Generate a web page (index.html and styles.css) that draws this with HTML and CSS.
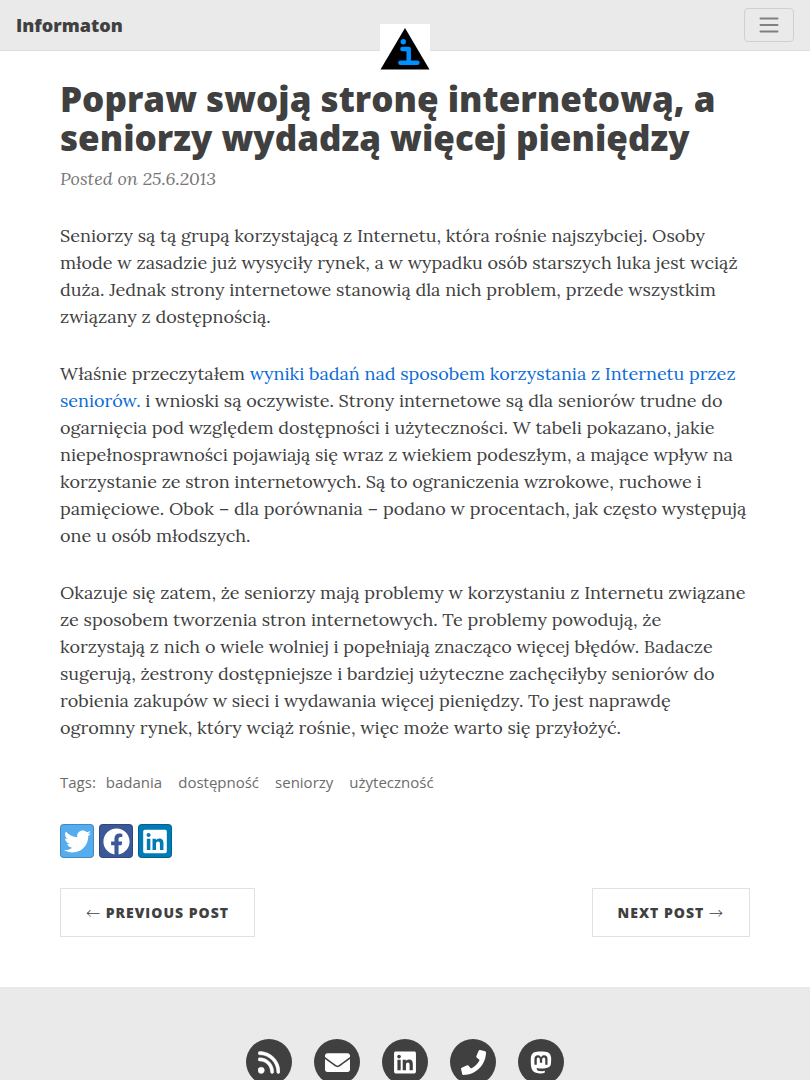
FILE: index.html
```html
<!DOCTYPE html>
<html lang="pl">
<head>
<meta charset="utf-8">
<meta name="viewport" content="width=device-width, initial-scale=1">
<title>Popraw swoją stronę internetową, a seniorzy wydadzą więcej pieniędzy</title>
<link rel="stylesheet" href="styles.css">
</head>
<body>
<nav class="navbar">
  <a class="brand" href="#">Informaton</a>
  <button class="toggler" type="button" aria-label="Menu">
    <svg viewBox="0 0 24 24" width="24" height="24"><path stroke="#808080" stroke-width="2" stroke-linecap="round" d="M3.500 5.500h17M3.500 12h17M3.500 18.500h17"/></svg>
  </button>
  <a class="avatar" href="#" aria-label="Informaton">
    <svg viewBox="0 0 50 50" width="50" height="50"><path d="M25 4 49.500 45.500H.5z"/><circle cx="23.300" cy="17.800" r="2.700" fill="#0090ff"/><path d="M22.400 25h6.300v13.600M20.400 38.700h17" fill="none" stroke="#0090ff" stroke-width="4.500" stroke-linecap="round" stroke-linejoin="round"/></svg>
  </a>
</nav>
<main class="container">
  <header class="post-heading">
    <h1>Popraw swoją stronę internetową, a seniorzy wydadzą więcej pieniędzy</h1>
    <p class="post-meta">Posted on 25.6.2013</p>
  </header>
  <article class="post">
    <p>Seniorzy są tą grupą korzystającą z Internetu, która rośnie najszybciej. Osoby młode w zasadzie już wysyciły rynek, a w wypadku osób starszych luka jest wciąż duża. Jednak strony internetowe stanowią dla nich problem, przede wszystkim związany z dostępnością.</p>
    <p>Właśnie przeczytałem <a href="#">wyniki badań nad sposobem korzystania z Internetu przez seniorów.</a> i wnioski są oczywiste. Strony internetowe są dla seniorów trudne do ogarnięcia pod względem dostępności i użyteczności. W tabeli pokazano, jakie niepełnosprawności pojawiają się wraz z wiekiem podeszłym, a mające wpływ na korzystanie ze stron internetowych. Są to ograniczenia wzrokowe, ruchowe i pamięciowe. Obok – dla porównania – podano w procentach, jak często występują one u osób młodszych.</p>
    <p>Okazuje się zatem, że seniorzy mają problemy w korzystaniu z Internetu związane ze sposobem tworzenia stron internetowych. Te problemy powodują, że korzystają z nich o wiele wolniej i popełniają znacząco więcej błędów. Badacze sugerują, żestrony dostępniejsze i bardziej użyteczne zachęciłyby seniorów do robienia zakupów w sieci i wydawania więcej pieniędzy. To jest naprawdę ogromny rynek, który wciąż rośnie, więc może warto się przyłożyć.</p>
  </article>
  <div class="tags">
    <span>Tags:</span>
    <a href="#">badania</a>
    <a href="#">dostępność</a>
    <a href="#">seniorzy</a>
    <a href="#">użyteczność</a>
  </div>
  <section class="share">
    <a class="twitter" href="#" aria-label="Twitter"><svg viewBox="0 0 512 512" width="27" height="27"><path d="M459.370 151.716c.325 4.548.325 9.097.325 13.645 0 138.720-105.583 298.558-298.558 298.558-59.452 0-114.680-17.219-161.137-47.106 8.447.974 16.568 1.299 25.340 1.299 49.055 0 94.213-16.568 130.274-44.832-46.132-.975-84.792-31.188-98.112-72.772 6.498.974 12.995 1.624 19.818 1.624 9.421 0 18.843-1.300 27.614-3.573-48.081-9.747-84.143-51.980-84.143-102.985v-1.299c13.969 7.797 30.214 12.670 47.431 13.319-28.264-18.843-46.781-51.005-46.781-87.391 0-19.492 5.197-37.360 14.294-52.954 51.655 63.675 129.300 105.258 216.365 109.807-1.624-7.797-2.599-15.918-2.599-24.040 0-57.828 46.782-104.934 104.934-104.934 30.213 0 57.502 12.670 76.670 33.137 23.715-4.548 46.456-13.320 66.599-25.340-7.798 24.366-24.366 44.833-46.132 57.827 21.117-2.273 41.584-8.122 60.426-16.243-14.292 20.791-32.161 39.308-52.628 54.253z"/></svg></a>
    <a class="facebook" href="#" aria-label="Facebook"><svg viewBox="0 0 512 512" width="27" height="27"><path d="M504 256C504 119 393 8 256 8S8 119 8 256c0 123.780 90.690 226.380 209.250 245V327.690h-63V256h63v-54.640c0-62.150 37-96.480 93.670-96.480 27.140 0 55.520 4.840 55.520 4.840v61h-31.280c-30.800 0-40.410 19.120-40.410 38.730V256h68.780l-11 71.690h-57.780V501C413.310 482.380 504 379.780 504 256z"/></svg></a>
    <a class="linkedin" href="#" aria-label="LinkedIn"><svg viewBox="0 0 448 512" width="24" height="27"><path d="M416 32H31.900C14.300 32 0 46.500 0 64.300v383.400C0 465.500 14.300 480 31.900 480H416c17.600 0 32-14.500 32-32.300V64.300c0-17.800-14.400-32.300-32-32.300zM135.400 416H69V202.200h66.500V416zm-33.200-243c-21.300 0-38.500-17.300-38.500-38.500S80.900 96 102.200 96c21.200 0 38.500 17.300 38.500 38.500 0 21.300-17.200 38.500-38.500 38.500zm282.100 243h-66.400V312c0-24.800-.5-56.700-34.500-56.700-34.600 0-39.900 27-39.900 54.900V416h-66.400V202.200h63.700v29.200h.9c8.900-16.800 30.600-34.500 62.900-34.500 67.200 0 79.700 44.300 79.700 101.900V416z"/></svg></a>
  </section>
  <nav class="pager">
    <a href="#"><span class="arrow">←</span> Previous Post</a>
    <a href="#">Next Post <span class="arrow">→</span></a>
  </nav>
</main>
<footer class="footer">
  <a href="#" aria-label="RSS"><svg viewBox="0 0 448 512" width="22" height="25"><path d="M0 64C0 46.300 14.300 32 32 32c229.800 0 416 186.200 416 416 0 17.700-14.300 32-32 32s-32-14.300-32-32C384 253.600 226.400 96 32 96 14.300 96 0 81.700 0 64zm0 352a64 64 0 1 1 128 0 64 64 0 1 1-128 0zm32-256c159.100 0 288 128.900 288 288 0 17.700-14.300 32-32 32s-32-14.300-32-32c0-123.700-100.300-224-224-224-17.700 0-32-14.300-32-32s14.300-32 32-32z" stroke="#fff" stroke-width="10"/></svg></a>
  <a href="#" aria-label="Email"><svg viewBox="0 0 512 512" width="25" height="25"><path d="M502.300 190.800c3.900-3.100 9.700-.2 9.700 4.700V400c0 26.500-21.500 48-48 48H48c-26.500 0-48-21.500-48-48V195.600c0-5 5.700-7.800 9.700-4.700 22.400 17.400 52.100 39.500 154.100 113.600 21.100 15.400 56.700 47.800 92.200 47.600 35.700.3 72-32.800 92.300-47.600 102-74.100 131.600-96.300 154-113.700zM256 320c23.200.4 56.600-29.200 73.400-41.400 132.700-96.300 142.800-104.700 173.400-128.700 5.800-4.500 9.200-11.500 9.200-18.900v-19c0-26.500-21.500-48-48-48H48c-26.500 0-48 21.500-48 48v19c0 7.400 3.400 14.300 9.200 18.900 30.600 23.900 40.700 32.400 173.400 128.700 16.800 12.200 50.200 41.800 73.400 41.400z"/></svg></a>
  <a href="#" aria-label="LinkedIn"><svg viewBox="0 0 448 512" width="22" height="25"><path d="M416 32H31.900C14.300 32 0 46.500 0 64.300v383.400C0 465.500 14.300 480 31.900 480H416c17.600 0 32-14.500 32-32.300V64.300c0-17.800-14.400-32.300-32-32.300zM135.400 416H69V202.200h66.500V416zm-33.200-243c-21.300 0-38.500-17.300-38.500-38.500S80.900 96 102.200 96c21.200 0 38.500 17.300 38.500 38.500 0 21.300-17.200 38.500-38.500 38.500zm282.100 243h-66.400V312c0-24.800-.5-56.700-34.500-56.700-34.600 0-39.900 27-39.900 54.900V416h-66.400V202.200h63.700v29.200h.9c8.900-16.800 30.600-34.500 62.900-34.500 67.200 0 79.700 44.300 79.700 101.900V416z"/></svg></a>
  <a href="#" aria-label="Phone"><svg viewBox="0 0 512 512" width="25" height="25"><path d="M493.400 24.600l-104-24c-11.300-2.600-22.900 3.300-27.500 13.900l-48 112c-4.200 9.800-1.400 21.300 6.900 28l60.600 49.600c-36 76.700-98.900 140.500-177.200 177.200l-49.600-60.600c-6.800-8.300-18.200-11.100-28-6.900l-112 48C3.900 366.500-2 378.100.6 389.400l24 104C27.100 504.200 36.700 512 48 512c256.100 0 464-207.500 464-464 0-11.200-7.700-20.900-18.600-23.400z"/></svg></a>
  <a href="#" aria-label="Mastodon"><svg viewBox="0 0 448 512" width="22" height="25"><path d="M433 179.110c0-97.200-63.710-125.700-63.710-125.700-62.520-28.700-228.560-28.400-290.480 0 0 0-63.720 28.500-63.720 125.700 0 115.700-6.600 259.400 105.630 289.100 40.510 10.700 75.320 13 103.330 11.400 50.810-2.800 79.320-18.100 79.320-18.100l-1.700-36.900s-36.310 11.400-77.120 10.100c-40.410-1.400-83-4.400-89.630-54a102.540 102.540 0 0 1-.9-13.900c85.630 20.900 158.650 9.100 178.750 6.700 56.120-6.700 105-41.300 111.230-72.900 9.800-49.800 9-121.500 9-121.500zm-75.120 125.200h-46.630v-114.200c0-49.700-64-51.600-64 6.900v62.500h-46.330V197c0-58.500-64-56.600-64-6.900v114.200H90.190c0-122.100-5.200-147.900 18.410-175 25.900-28.900 79.820-30.800 103.830 6.100l11.600 19.500 11.600-19.500c24.110-37.100 78.120-34.800 103.830-6.100 23.710 27.300 18.400 53 18.400 175z"/></svg></a>
</footer>
</body>
</html>
```

FILE: styles.css
```css
* { box-sizing: border-box; }
body {
  margin: 0;
  font: 18px/27px Lora, "Liberation Serif", serif;
  color: #404040;
  background: #fff;
}
a { color: inherit; text-decoration: none; }
svg { display: block; }
h1, p { margin: 0; }
.navbar {
  position: relative;
  display: flex;
  align-items: center;
  justify-content: space-between;
  padding: 8px 16px;
  background: #eaeaea;
  border-bottom: 1px solid #ddd;
}
.brand { font: 800 18px/27px "Open Sans", sans-serif; }
.toggler {
  padding: 4px 12px;
  background: none;
  border: 1px solid #d0d0d0;
  border-radius: 4px;
}
.avatar {
  position: absolute;
  top: 24px;
  left: 50%;
  margin-left: -25px;
  background: #fff;
}
.container { max-width: 720px; margin: 0 auto; padding: 28px 15px 50px; }
h1 { font: 800 35px/39px "Open Sans", sans-serif; }
.post-meta { margin-top: 8px; color: #777; font-style: italic; }
.post { padding-top: 30px; }
.post p { margin-bottom: 30px; }
.post p:last-child { margin-bottom: 29px; }
.post a { color: #0a6cd6; }
.tags {
  display: flex;
  flex-wrap: wrap;
  gap: 16px;
  font: 400 15px/24px "Open Sans", sans-serif;
  color: #6c6c6c;
}
.tags span { margin-right: -6px; }
.share { display: flex; gap: 5px; margin-top: 30px; }
.share a {
  display: grid;
  place-items: center;
  width: 34px;
  height: 34px;
  border: 1px solid rgba(0, 0, 0, .2);
  border-radius: 4px;
}
.share svg, .footer svg { fill: #fff; }
.twitter { background: #55acee; }
.facebook { background: #3b5998; }
.linkedin { background: #007bb6; }
.pager { display: flex; justify-content: space-between; margin-top: 30px; }
.pager a {
  padding: 13px 25px;
  border: 1px solid #dee2e6;
  font: 800 14px/21px "Open Sans", sans-serif;
  letter-spacing: 1px;
  text-transform: uppercase;
}
.arrow { font-family: "Noto Sans CJK JP", sans-serif; font-weight: 300; line-height: 1; }
.footer {
  display: flex;
  justify-content: center;
  gap: 22px;
  padding: 52px 16px;
  background: #eaeaea;
}
.footer a {
  display: grid;
  place-items: center;
  width: 46px;
  height: 46px;
  border-radius: 50%;
  background: #404040;
}
```
